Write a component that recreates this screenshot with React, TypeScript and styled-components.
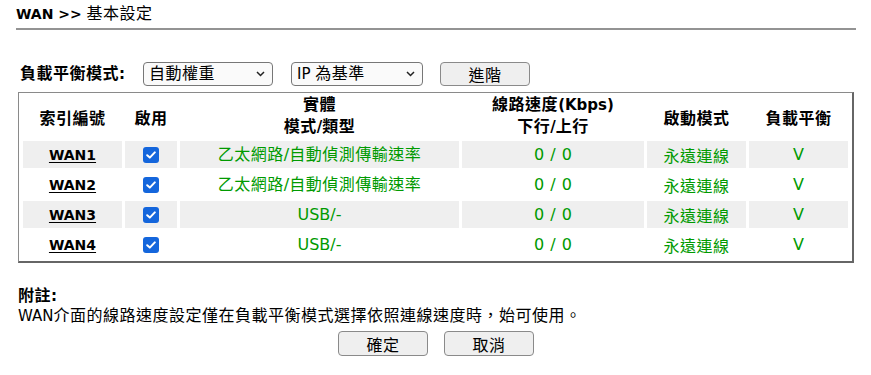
import React from "react";
import styled, { createGlobalStyle } from "styled-components";

const GlobalStyle = createGlobalStyle`
  html, body { margin: 0; padding: 0; background: #ffffff; }
  body {
    font-family: "DejaVu Sans", "Noto Sans CJK TC", sans-serif;
    color: #000000;
  }
`;

const HAN_RE = /([\u2E80-\u9FFF\u3000-\u303F\uFF00-\uFFEF]+)/;

const Han = styled.span<{ $light?: boolean }>`
  font-family: "Noto Sans CJK TC", sans-serif;
  font-size: 16px;
  line-height: 1;
  letter-spacing: 0.5px;
  ${(p) => (p.$light ? "font-weight: 400;" : "")}
`;

function Mixed({ text, light }: { text: string; light?: boolean }) {
  return (
    <>
      {text.split(HAN_RE).map((part, i) =>
        HAN_RE.test(part) ? (
          <Han key={i} $light={light}>
            {part}
          </Han>
        ) : (
          <React.Fragment key={i}>{part}</React.Fragment>
        )
      )}
    </>
  );
}

const Page = styled.div`
  width: 840px;
  padding: 0 15px 0 16px;
`;

const Title = styled.div`
  font-size: 14px;
  font-weight: bold;
  line-height: 20px;
  padding: 4px 0 4px 0;
  border-bottom: 2px solid #939393;
`;

const ModeRow = styled.div`
  display: flex;
  align-items: center;
  height: 24px;
  margin-top: 32px;
  padding-left: 4px;
`;

const ModeLabel = styled.div`
  font-size: 15px;
  font-weight: bold;
  line-height: 20px;
  width: 123px;
`;

const SelectBox = styled.div<{ $w: number; $gap: number }>`
  box-sizing: border-box;
  width: ${(p) => p.$w}px;
  height: 24px;
  margin-right: ${(p) => p.$gap}px;
  border: 1px solid #777777;
  border-radius: 4px;
  background: #fafafa;
  display: flex;
  align-items: center;
  justify-content: space-between;
  padding: 0 7px 0 5px;
  font-size: 15px;
  line-height: 20px;
`;

const Chevron = () => (
  <svg width="9" height="6" viewBox="0 0 9 6" aria-hidden="true">
    <path d="M1 1 L4.5 4.5 L8 1" fill="none" stroke="#222" strokeWidth="1.5" />
  </svg>
);

const Button = styled.button<{ $h?: number }>`
  box-sizing: border-box;
  width: 90px;
  height: ${(p) => p.$h ?? 24}px;
  border: 1px solid #8a8a8a;
  border-radius: 4px;
  background: #efefef;
  font-family: inherit;
  font-size: 15px;
  line-height: 20px;
  padding: 0;
  color: #000;
  display: flex;
  align-items: center;
  justify-content: center;
`;

const Table = styled.div`
  box-sizing: border-box;
  width: 836px;
  margin: 6px 0 0 2px;
  border-style: solid;
  border-width: 1px 2px 2px 1px;
  border-color: #8a8a8a #666666 #666666 #8a8a8a;
  padding: 2px 4px 3px 4px;
  display: grid;
  grid-template-columns: 99px 52px 279px 182px 99px 99px;
  grid-auto-rows: 27px;
  grid-template-rows: 43px;
  gap: 3px;
`;

const HeadCell = styled.div`
  display: flex;
  flex-direction: column;
  align-items: center;
  justify-content: center;
  font-weight: bold;
  font-size: 15px;
  line-height: 21px;
  text-align: center;
`;

const HeadLine = styled.div`
  line-height: 21px;
  &:first-child {
    margin-bottom: 1px;
  }
`;

const Cell = styled.div<{ $shade: boolean; $green?: boolean }>`
  display: flex;
  align-items: center;
  justify-content: center;
  background: ${(p) => (p.$shade ? "#efefef" : "#ffffff")};
  color: ${(p) => (p.$green ? "#009a00" : "#000000")};
  font-size: 16px;
  line-height: 20px;
  word-spacing: 1px;
`;

const WanLink = styled.a`
  font-size: 14px;
  font-weight: bold;
  color: #000000;
  text-decoration: underline;
  text-underline-offset: 2px;
`;

const Check = styled.span`
  width: 16px;
  height: 16px;
  border-radius: 3px;
  background: #1466dc;
  display: inline-flex;
  align-items: center;
  justify-content: center;
`;

const CheckMark = () => (
  <svg width="10" height="8" viewBox="0 0 10 8" aria-hidden="true">
    <path d="M1.2 4.2 L3.8 6.6 L8.8 1.4" fill="none" stroke="#fff" strokeWidth="2" strokeLinecap="round" strokeLinejoin="round" />
  </svg>
);

const Note = styled.div`
  margin-top: 23px;
  padding-left: 2px;
  font-size: 15px;
  line-height: 20px;
`;

const NoteTitle = styled.div`
  font-weight: bold;
`;

const Actions = styled.div`
  display: flex;
  justify-content: center;
  gap: 16px;
  margin-top: 5px;
`;

type Row = { name: string; type: string };
const rows: Row[] = [
  { name: "WAN1", type: "乙太網路/自動偵測傳輸速率" },
  { name: "WAN2", type: "乙太網路/自動偵測傳輸速率" },
  { name: "WAN3", type: "USB/-" },
  { name: "WAN4", type: "USB/-" },
];

export default function App() {
  return (
    <>
      <GlobalStyle />
      <Page>
        <Title>
          WAN &gt;&gt; <Mixed text="基本設定" light />
        </Title>

        <ModeRow>
          <ModeLabel>
            <Mixed text="負載平衡模式:" />
          </ModeLabel>
          <SelectBox $w={130} $gap={18}>
            <span>
              <Mixed text="自動權重" />
            </span>
            <Chevron />
          </SelectBox>
          <SelectBox $w={132} $gap={17}>
            <span>
              <Mixed text="IP 為基準" />
            </span>
            <Chevron />
          </SelectBox>
          <Button>
            <Mixed text="進階" />
          </Button>
        </ModeRow>

        <Table>
          <HeadCell>
            <Mixed text="索引編號" />
          </HeadCell>
          <HeadCell>
            <Mixed text="啟用" />
          </HeadCell>
          <HeadCell>
            <HeadLine>
              <Mixed text="實體" />
            </HeadLine>
            <HeadLine>
              <Mixed text="模式/類型" />
            </HeadLine>
          </HeadCell>
          <HeadCell>
            <HeadLine>
              <Mixed text="線路速度(Kbps)" />
            </HeadLine>
            <HeadLine>
              <Mixed text="下行/上行" />
            </HeadLine>
          </HeadCell>
          <HeadCell>
            <Mixed text="啟動模式" />
          </HeadCell>
          <HeadCell>
            <Mixed text="負載平衡" />
          </HeadCell>

          {rows.map((r, i) => {
            const shade = i % 2 === 0;
            return (
              <React.Fragment key={r.name}>
                <Cell $shade={shade}>
                  <WanLink href="#">{r.name}</WanLink>
                </Cell>
                <Cell $shade={shade}>
                  <Check>
                    <CheckMark />
                  </Check>
                </Cell>
                <Cell $shade={shade} $green>
                  <span>
                    <Mixed text={r.type} />
                  </span>
                </Cell>
                <Cell $shade={shade} $green>
                  0 / 0
                </Cell>
                <Cell $shade={shade} $green>
                  <Mixed text="永遠連線" />
                </Cell>
                <Cell $shade={shade} $green>
                  V
                </Cell>
              </React.Fragment>
            );
          })}
        </Table>

        <Note>
          <NoteTitle>
            <Mixed text="附註:" />
          </NoteTitle>
          <div>
            <Mixed text="WAN介面的線路速度設定僅在負載平衡模式選擇依照連線速度時，始可使用。" />
          </div>
        </Note>

        <Actions>
          <Button $h={25}>
            <Mixed text="確定" />
          </Button>
          <Button $h={25}>
            <Mixed text="取消" />
          </Button>
        </Actions>
      </Page>
    </>
  );
}
